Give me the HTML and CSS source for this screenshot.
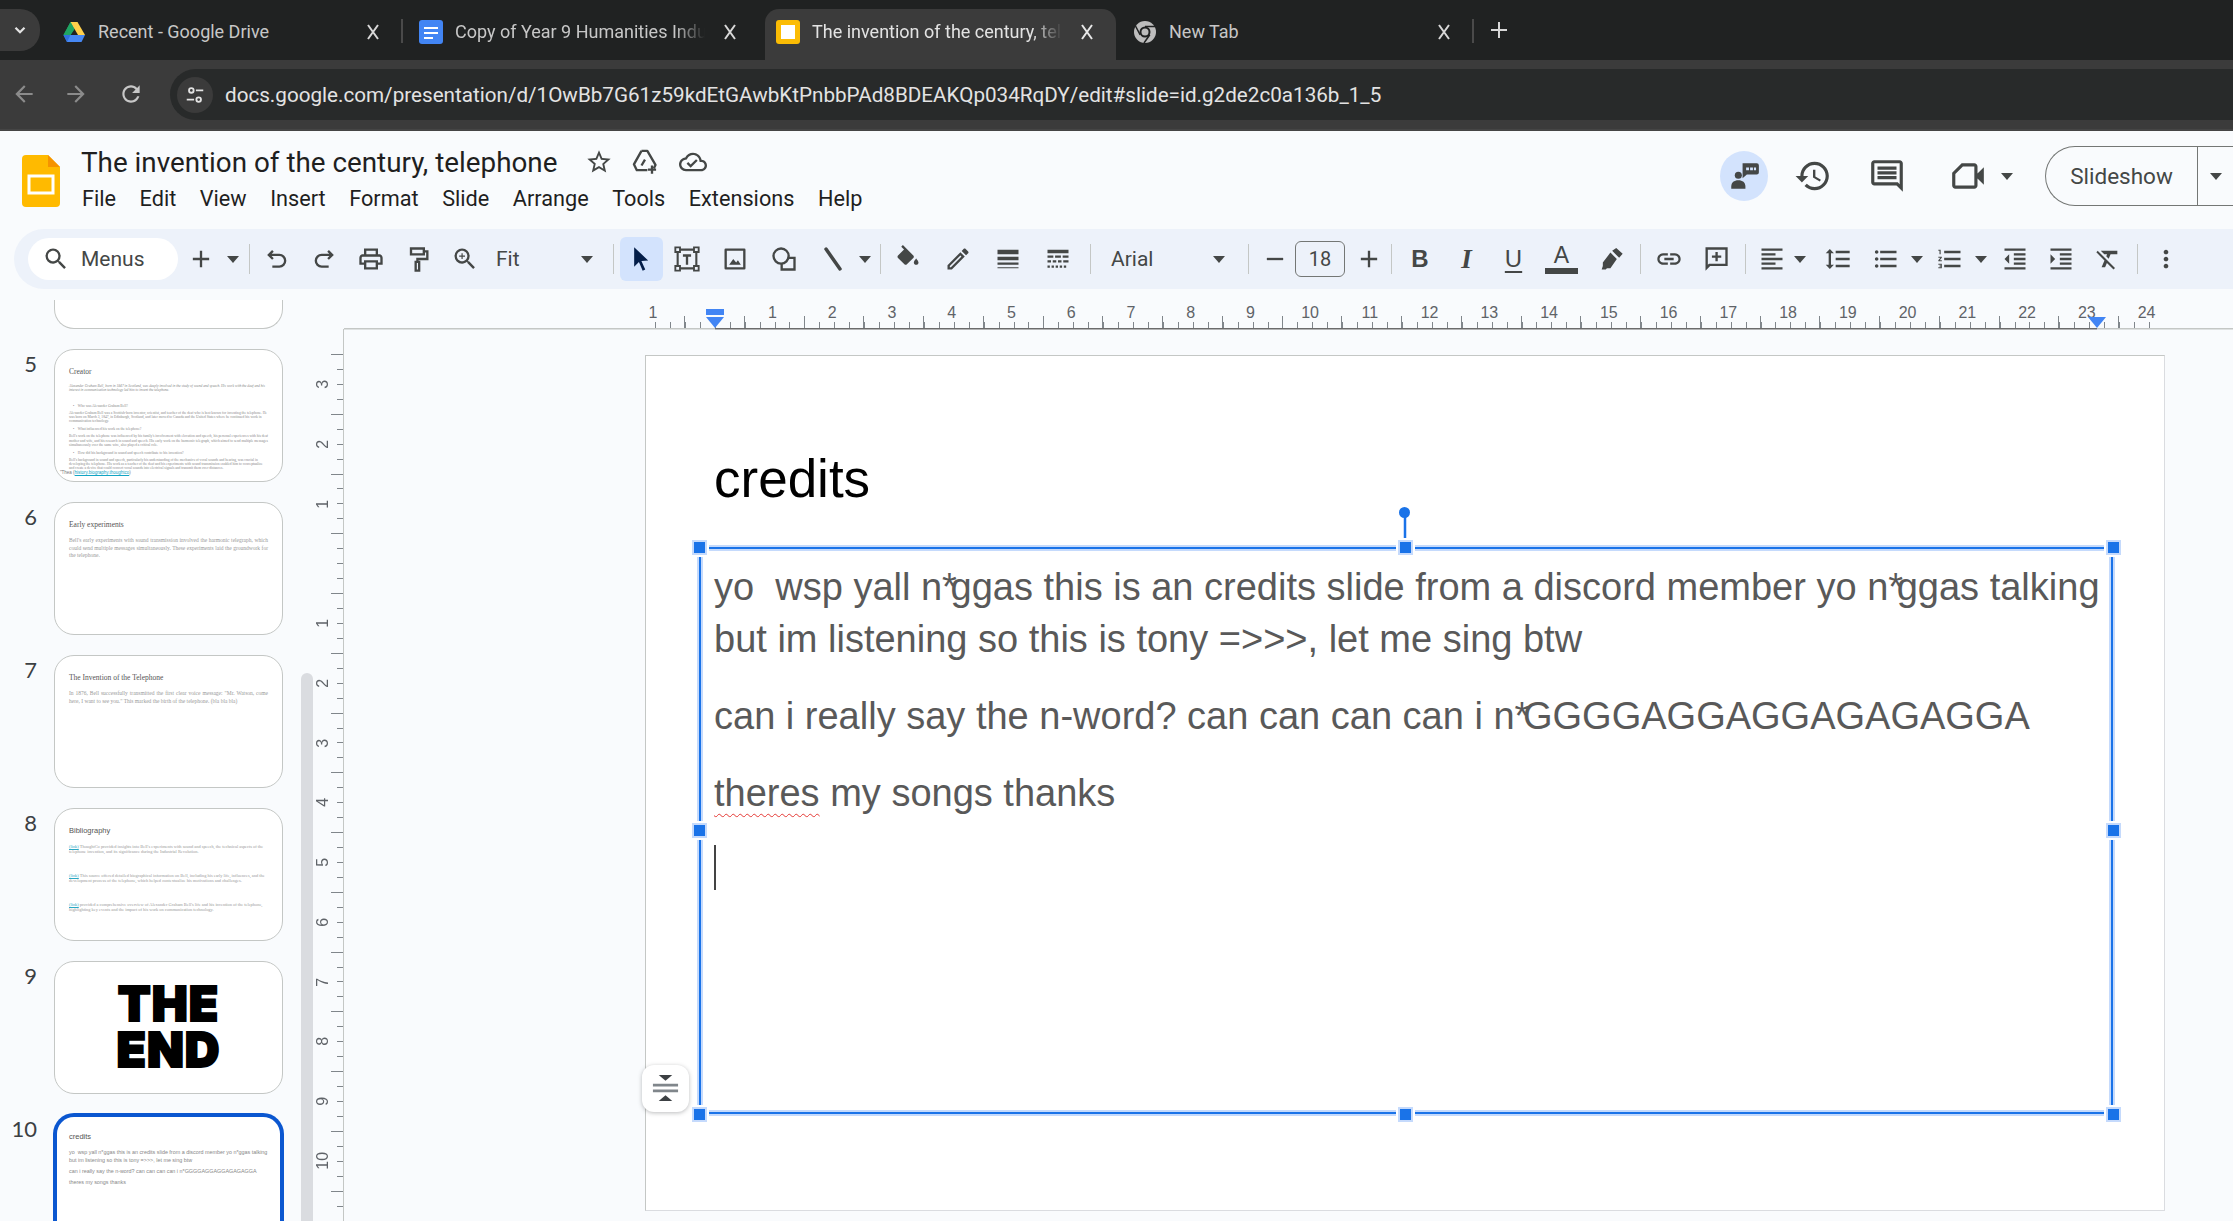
FILE: index.html
```html
<!DOCTYPE html>
<html lang="en">
<head>
<meta charset="utf-8">
<title>The invention of the century, telephone</title>
<link rel="stylesheet" href="styles.css">
</head>
<body>
<header class="tabstrip">
  <div class="tabsearch"><svg class="ic18" viewBox="0 0 24 24"><path d="M6 9l6 6 6-6" fill="none" stroke="#e3e3e3" stroke-width="3"/></svg></div>
  <div class="tab sep-after">
    <svg class="favicon" viewBox="0 0 24 24"><path d="M8.5 2h7l-3.5 8-3.5 5-7 0z" fill="#1fa463"/><path d="M8.5 2h7L23 15h-7z" fill="#ffd04b"/><path d="M1.500 15H8.500L16 15h7l-3.500 7H5z" fill="#4688f4"/><path d="M8.500 2L12 9 8.500 15h-7z" fill="#1fa463"/><path d="M1.500 15h7L5 22z" fill="#2f6fdc"/></svg>
    <span class="tabtext">Recent - Google Drive</span>
    <svg class="tabclose" viewBox="0 0 24 24"><path d="M7 5l10 14M17 5L7 19" stroke="#d8d8d8" stroke-width="2"/></svg>
  </div>
  <div class="tab">
    <svg class="favicon" viewBox="0 0 24 24"><rect x="0" y="0" width="24" height="24" rx="3" fill="#4285f4"/><path d="M5 7h14v2H5zm0 5h14v2H5zm0 5h9v2H5z" fill="#fff"/></svg>
    <span class="tabtext fade">Copy of Year 9 Humanities Industrial Revolution</span>
    <svg class="tabclose" viewBox="0 0 24 24"><path d="M7 5l10 14M17 5L7 19" stroke="#d8d8d8" stroke-width="2"/></svg>
  </div>
  <div class="tab active">
    <svg class="favicon" viewBox="0 0 24 24"><rect width="24" height="24" rx="3" fill="#fbbc04"/><rect x="5" y="5" width="14" height="14" fill="#fff"/></svg>
    <span class="tabtext fade">The invention of the century, telephone</span>
    <svg class="tabclose" viewBox="0 0 24 24"><path d="M7 5l10 14M17 5L7 19" stroke="#e8e8e8" stroke-width="2"/></svg>
  </div>
  <div class="tab sep-after">
    <svg class="favicon" viewBox="0 0 24 24"><circle cx="12" cy="12" r="11" fill="#bdbdbd"/><circle cx="12" cy="12" r="5.500" fill="#202222"/><circle cx="12" cy="12" r="3.500" fill="#bdbdbd"/><path d="M12 6.500h10M7.200 14.800L2.500 6M16.800 14.800L11 23" stroke="#202222" stroke-width="1.500"/></svg>
    <span class="tabtext">New Tab</span>
    <svg class="tabclose" viewBox="0 0 24 24"><path d="M7 5l10 14M17 5L7 19" stroke="#d8d8d8" stroke-width="2"/></svg>
  </div>
  <svg class="newtab" viewBox="0 0 24 24"><path d="M12 4v16M4 12h16" stroke="#d8d8d8" stroke-width="2"/></svg>
</header>

<nav class="addr">
  <svg class="nav nav-back" viewBox="0 0 24 24"><path d="M20 11H7.830l5.590-5.590L12 4l-8 8 8 8 1.410-1.410L7.830 13H20v-2z"/></svg>
  <svg class="nav nav-fwd" viewBox="0 0 24 24"><path d="M12 4l-1.410 1.410L16.170 11H4v2h12.170l-5.580 5.590L12 20l8-8z"/></svg>
  <svg class="nav nav-reload" viewBox="0 0 24 24"><path d="M17.650 6.350C16.200 4.900 14.210 4 12 4c-4.420 0-7.990 3.580-7.990 8s3.570 8 7.990 8c3.730 0 6.840-2.550 7.730-6h-2.080c-.82 2.330-3.040 4-5.650 4-3.310 0-6-2.690-6-6s2.690-6 6-6c1.660 0 3.140.69 4.220 1.780L13 11h7V4l-2.350 2.350z"/></svg>
  <div class="omnibox">
    <div class="chip"><svg viewBox="0 0 24 24"><circle cx="8" cy="7" r="2.500" fill="none" stroke="#e3e3e3" stroke-width="2"/><circle cx="16" cy="17" r="2.500" fill="none" stroke="#e3e3e3" stroke-width="2"/><path d="M13 7h8M3 17h8" stroke="#e3e3e3" stroke-width="2"/></svg></div>
    <span class="url">docs.google.com/presentation/d/1OwBb7G61z59kdEtGAwbKtPnbbPAd8BDEAKQp034RqDY/edit#slide=id.g2de2c0a136b_1_5</span>
  </div>
</nav>

<section class="docshead">
  <svg class="logo" viewBox="0 0 38 52"><path d="M4 0h22l12 12v36a4 4 0 0 1-4 4H4a4 4 0 0 1-4-4V4a4 4 0 0 1 4-4z" fill="#ffba00"/><path d="M26 0l12 12H26z" fill="#f59300"/><path d="M7 21h24v17H7z" fill="none" stroke="#fff" stroke-width="3"/></svg>
  <div class="doctitle">
    <div class="titlerow">
      <span class="title">The invention of the century, telephone</span>
      <svg class="ti ti-star" viewBox="0 0 24 24"><path d="M22 9.240l-7.190-.62L12 2 9.190 8.630 2 9.240l5.460 4.730L5.820 21 12 17.270 18.180 21l-1.630-7.030L22 9.240zM12 15.400l-3.760 2.270 1-4.280-3.320-2.880 4.380-.38L12 6.100l1.710 4.040 4.380.38-3.320 2.880 1 4.280L12 15.400z"/></svg>
      <svg class="ti ti-drive" viewBox="0 0 24 24"><path d="M9 2.500h5l7 12-1.500 3M9 2.500L2.500 14l2.500 5h9" fill="none" stroke="#444746" stroke-width="2" stroke-linejoin="round"/><path d="M9 15l3-5M18 15v7M14.500 18.500h7" fill="none" stroke="#444746" stroke-width="2"/></svg>
      <svg class="ti ti-cloud" viewBox="0 0 24 24"><path d="M19.350 10.040C18.670 6.590 15.640 4 12 4 9.110 4 6.600 5.640 5.350 8.040 2.340 8.360 0 10.910 0 14c0 3.310 2.690 6 6 6h13c2.760 0 5-2.240 5-5 0-2.640-2.050-4.780-4.650-4.960zM19 18H6c-2.210 0-4-1.790-4-4 0-2.050 1.530-3.760 3.560-3.970l1.070-.11.500-.95C8.080 7.140 9.940 6 12 6c2.620 0 4.880 1.860 5.390 4.430l.3 1.500 1.530.11c1.560.1 2.780 1.410 2.780 2.960 0 1.650-1.350 3-3 3zm-9-3.820l-2.090-2.090L6.500 13.500 10 17l6.010-6.010-1.410-1.410z"/></svg>
    </div>
    <div class="menubar"><span>File</span><span>Edit</span><span>View</span><span>Insert</span><span>Format</span><span>Slide</span><span>Arrange</span><span>Tools</span><span>Extensions</span><span>Help</span></div>
  </div>
  <div class="headright">
    <div class="avatar"><svg viewBox="0 0 24 24"><circle cx="8" cy="11.500" r="2.500"/><path d="M3 21v-1.500C3 16.500 5 15 8 15s5 1.500 5 4.500V21z"/><path d="M11 3h10a1.500 1.500 0 0 1 1.500 1.500v5A1.500 1.500 0 0 1 21 11h-7l-3 2.500z"/><path d="M13.500 6h2v2h-2zm2.800 0h2v2h-2zm2.700 0h1.500v2H19z" fill="#d3e3fd"/></svg></div>
    <svg class="hi hi-history" viewBox="0 0 24 24"><path d="M13 3c-4.970 0-9 4.030-9 9H1l3.890 3.890.07.14L9 12H6c0-3.870 3.130-7 7-7s7 3.130 7 7-3.130 7-7 7c-1.930 0-3.680-.79-4.940-2.060l-1.420 1.420C8.270 19.990 10.510 21 13 21c4.970 0 9-4.030 9-9s-4.030-9-9-9zm-1 5v5l4.280 2.540.72-1.210-3.500-2.080V8H12z"/></svg>
    <svg class="hi hi-comment" viewBox="0 0 24 24"><path d="M21.990 4c0-1.100-.89-2-1.990-2H4c-1.100 0-2 .9-2 2v12c0 1.100.9 2 2 2h14l4 4-.01-18zM20 4v13.170L18.830 16H4V4h16zM6 12h12v2H6zm0-3h12v2H6zm0-3h12v2H6z"/></svg>
    <svg class="hi hi-camera" viewBox="0 0 24 24"><path d="M18 10.480V6c0-1.100-.9-2-2-2H8L2 10v8c0 1.100.9 2 2 2h12c1.100 0 2-.9 2-2v-4.480l4 3.980v-11l-4 3.980zm-2-.79V18H4v-7.200L8.800 6H16v3.690z"/></svg>
    <span class="caret caret-cam"></span>
    <div class="slideshow"><span class="ss-label">Slideshow</span><span class="ss-drop"><span class="caret"></span></span></div>
  </div>
</section>

<section class="toolbar">
  <div class="menus"><svg class="tic" viewBox="0 0 24 24"><path d="M15.500 14h-.79l-.28-.27A6.471 6.471 0 0 0 16 9.500 6.500 6.500 0 1 0 9.500 16c1.610 0 3.090-.59 4.230-1.570l.27.28v.79l5 4.990L20.490 19l-4.990-5zm-6 0C7.010 14 5 11.990 5 9.500S7.010 5 9.500 5 14 7.010 14 9.500 11.990 14 9.500 14z"/></svg><span>Menus</span></div>
  <div class="tb w46"><svg class="tic" viewBox="0 0 24 24"><path d="M19 13h-6v6h-2v-6H5v-2h6V5h2v6h6v2z"/></svg></div>
  <div class="tb w18"><span class="caret"></span></div>
  <i class="sep ml7 mr3"></i>
  <div class="tb w47"><svg class="tic" viewBox="0 0 24 24"><path d="M8.500 5L5 8.500 8.500 12M5 8.500h9a5 5 0 0 1 0 10H8" fill="none" stroke="#444746" stroke-width="2"/></svg></div>
  <div class="tb w47"><svg class="tic" viewBox="0 0 24 24"><path d="M15.500 5L19 8.500 15.500 12M19 8.500h-9a5 5 0 0 0 0 10h6" fill="none" stroke="#444746" stroke-width="2"/></svg></div>
  <div class="tb w47"><svg class="tic" viewBox="0 0 24 24"><path d="M19 8h-1V3H6v5H5c-1.660 0-3 1.340-3 3v6h4v4h12v-4h4v-6c0-1.660-1.340-3-3-3zM8 5h8v3H8V5zm8 14H8v-4h8v4zm2-4v-2H6v2H4v-4c0-.55.45-1 1-1h14c.55 0 1 .45 1 1v4h-2z"/></svg></div>
  <div class="tb w47"><svg class="tic" viewBox="0 0 24 24"><path d="M6 3h11v5H6zM17 5.500h3V12h-8.500v2.500M10 14.500h3V22h-3z" fill="none" stroke="#444746" stroke-width="2"/></svg></div>
  <div class="tb w47"><svg class="tic" viewBox="0 0 24 24"><path d="M15.500 14h-.79l-.28-.27A6.471 6.471 0 0 0 16 9.500 6.500 6.500 0 1 0 9.500 16c1.610 0 3.090-.59 4.230-1.570l.27.28v.79l5 4.990L20.490 19l-4.990-5zm-6 0C7.010 14 5 11.990 5 9.500S7.010 5 9.500 5 14 7.010 14 9.500 11.990 14 9.500 14z"/><path d="M10 7H9v2H7v1h2v2h1v-2h2V9h-2z"/></svg></div>
  <div class="select sel-zoom"><span>Fit</span><span class="caret"></span></div>
  <i class="sep mr6"></i>
  <div class="tb w43 on"><svg class="tic cursor" viewBox="0 0 24 24"><path d="M7 2l12 11.200-5.800.5 3.300 7.300-2.200 1-3.200-7.400L7 18.600z" fill="#041e49"/></svg></div>
  <div class="tb w48"><svg class="tic" viewBox="0 0 24 24"><path d="M4 4h16v16H4z" fill="none" stroke="#444746" stroke-width="1.800"/><path d="M2 2h4v4H2zm16 0h4v4h-4zM2 18h4v4H2zm16 0h4v4h-4z" fill="#edf2fa" stroke="#444746" stroke-width="1.600"/><path d="M8.500 8h7v2h-2.500v7h-2v-7H8.500z"/></svg></div>
  <div class="tb w48"><svg class="tic" viewBox="0 0 24 24"><path d="M4 3h16a1 1 0 0 1 1 1v16a1 1 0 0 1-1 1H4a1 1 0 0 1-1-1V4a1 1 0 0 1 1-1zm1 2v14h14V5z"/><path d="M7 17l3.500-5 2.500 3 1.500-2 2.500 4z"/></svg></div>
  <div class="tb w50"><svg class="tic" viewBox="0 0 24 24"><circle cx="9.500" cy="9.500" r="6.500" fill="none" stroke="#444746" stroke-width="2"/><path d="M15 11h6v10H10v-5" fill="none" stroke="#444746" stroke-width="2"/></svg></div>
  <div class="tb w47"><svg class="tic" viewBox="0 0 24 24"><path d="M6 3.500L18 20.500" stroke="#444746" stroke-width="3" stroke-linecap="round"/></svg></div>
  <div class="tb w18"><span class="caret"></span></div>
  <i class="sep ml6 mr2"></i>
  <div class="tb w50"><svg class="tic" viewBox="0 0 24 24"><path d="M16.560 8.940L7.620 0 6.210 1.410l2.380 2.380-5.150 5.150c-.59.59-.59 1.540 0 2.120l5.500 5.500c.29.29.68.44 1.060.44s.77-.15 1.060-.44l5.500-5.500c.59-.58.59-1.530 0-2.120zM19 11.500s-2 2.170-2 3.500c0 1.100.9 2 2 2s2-.9 2-2c0-1.330-2-3.500-2-3.500z"/></svg></div>
  <div class="tb w50"><svg class="tic" viewBox="0 0 24 24"><path d="M14.060 9.020l.92.920L5.920 19H5v-.92l9.060-9.060M17.660 3c-.25 0-.51.1-.7.29l-1.830 1.830 3.750 3.750 1.830-1.830c.39-.39.39-1.020 0-1.410l-2.340-2.340c-.2-.2-.45-.29-.71-.29zm-3.600 3.190L3 17.250V21h3.750L17.810 9.940l-3.750-3.750z"/></svg></div>
  <div class="tb w50"><svg class="tic" viewBox="0 0 24 24"><path d="M3 17h18v-2H3v2zm0 3h18v-1H3v1zm0-7h18v-3H3v3zm0-9v4h18V4H3z"/></svg></div>
  <div class="tb w50"><svg class="tic" viewBox="0 0 24 24"><path d="M3 4h18v3H3zm0 5h5v2H3zm6.500 0h5v2h-5zM16 9h5v2h-5zM3 13h3v2H3zm4.500 0h3v2h-3zm4.500 0h3v2h-3zm4.500 0h4.500v2h-4.500zM3 17.500h2v2H3zm3.500 0h2v2h-2zm3.500 0h2v2h-2zm3.500 0h2v2h-2zm3.500 0h2v2h-2z"/></svg></div>
  <i class="sep ml7"></i>
  <div class="select sel-font"><span>Arial</span><span class="caret"></span></div>
  <i class="sep ml7 mr5"></i>
  <div class="tb w41"><svg class="tic" viewBox="0 0 24 24"><path d="M5 11h14v2H5z"/></svg></div>
  <div class="sizebox">18</div>
  <div class="tb w44 ml2"><svg class="tic" viewBox="0 0 24 24"><path d="M19 13h-6v6h-2v-6H5v-2h6V5h2v6h6v2z"/></svg></div>
  <i class="sep mr5"></i>
  <div class="tb w46 fmt fmt-b">B</div>
  <div class="tb w47 fmt fmt-i">I</div>
  <div class="tb w47 fmt fmt-u">U</div>
  <div class="tb w49 fmt fmt-a"><span>A</span><i class="colorbar"></i></div>
  <div class="tb w50"><svg class="tic" viewBox="0 0 24 24"><path d="M16 9L10.500 3.500 4 12v3l-1 3h3.500l1-1h3zM12 2l6 6 3-3.500-5.500-5z" transform="translate(1 3)"/></svg></div>
  <i class="sep ml4 mr5"></i>
  <div class="tb w46"><svg class="tic" viewBox="0 0 24 24"><path d="M3.900 12c0-1.710 1.390-3.100 3.100-3.100h4V7H7c-2.760 0-5 2.240-5 5s2.240 5 5 5h4v-1.900H7c-1.710 0-3.100-1.390-3.100-3.100zM8 13h8v-2H8v2zm9-6h-4v1.900h4c1.710 0 3.100 1.390 3.100 3.100s-1.390 3.100-3.100 3.100h-4V17h4c2.760 0 5-2.240 5-5s-2.240-5-5-5z"/></svg></div>
  <div class="tb w47"><svg class="tic" viewBox="0 0 24 24"><path d="M22 2H3v20l4-4h15V2zm-2 14H6l-1 1V4h15v12z"/><path d="M13.500 6h-2v3h-3v2h3v3h2v-3h3V9h-3z"/></svg></div>
  <i class="sep ml6 mr5"></i>
  <div class="tb w42"><svg class="tic" viewBox="0 0 24 24"><path d="M3 3h18v2H3zm0 4h12v2H3zm0 4h18v2H3zm0 4h12v2H3zm0 4h18v2H3z"/></svg></div>
  <div class="tb w14"><span class="caret"></span></div>
  <div class="tb w62"><svg class="tic" viewBox="0 0 24 24"><path d="M6 7h2.500L5 3.500 1.500 7H4v10H1.500L5 20.500 8.500 17H6V7zm4-2v2h12V5H10zm0 14h12v-2H10v2zm0-6h12v-2H10v2z"/></svg></div>
  <div class="tb w34"><svg class="tic" viewBox="0 0 24 24"><path d="M4 10.500c-.83 0-1.500.67-1.500 1.500s.67 1.500 1.500 1.500 1.500-.67 1.500-1.500-.67-1.500-1.500-1.500zm0-6c-.83 0-1.500.67-1.500 1.500S3.170 7.500 4 7.500 5.500 6.830 5.500 6 4.830 4.500 4 4.500zm0 12c-.83 0-1.500.68-1.500 1.500s.68 1.500 1.500 1.500 1.500-.68 1.500-1.500-.67-1.500-1.500-1.500zM7 19h14v-2H7v2zm0-6h14v-2H7v2zm0-8v2h14V5H7z"/></svg></div>
  <div class="tb w28"><span class="caret"></span></div>
  <div class="tb w38"><svg class="tic" viewBox="0 0 24 24"><path d="M2 17h2v.5H3v1h1v.5H2v1h3v-4H2v1zm1-9h1V4H2v1h1v3zm-1 3h1.800L2 13.100v.9h3v-1H3.200L5 10.900V10H2v1zm5-6v2h14V5H7zm0 14h14v-2H7v2zm0-6h14v-2H7v2z"/></svg></div>
  <div class="tb w24"><span class="caret"></span></div>
  <div class="tb w44"><svg class="tic" viewBox="0 0 24 24"><path d="M11 17h10v-2H11v2zm-8-5l4 4V8l-4 4zm0 9h18v-2H3v2zM3 3v2h18V3H3zm8 6h10V7H11v2zm0 4h10v-2H11v2z"/></svg></div>
  <div class="tb w48"><svg class="tic" viewBox="0 0 24 24"><path d="M3 21h18v-2H3v2zM3 8v8l4-4-4-4zm8 9h10v-2H11v2zM3 3v2h18V3H3zm8 6h10V7H11v2zm0 4h10v-2H11v2z"/></svg></div>
  <div class="tb w45"><svg class="tic" viewBox="0 0 24 24"><path d="M3.270 5L2 6.270l6.970 6.970L6.500 19h3l1.570-3.660L16.730 21 18 19.730 3.550 5.270 3.270 5zM6 5v.18L8.820 8h2.400l-.72 1.680 2.100 2.100L14.210 8H20V5H6z"/></svg></div>
  <i class="sep ml7 mr4"></i>
  <div class="tb w48"><svg class="tic" viewBox="0 0 24 24"><path d="M12 8c1.100 0 2-.9 2-2s-.9-2-2-2-2 .9-2 2 .9 2 2 2zm0 2c-1.100 0-2 .9-2 2s.9 2 2 2 2-.9 2-2-.9-2-2-2zm0 6c-1.100 0-2 .9-2 2s.9 2 2 2 2-.9 2-2-.9-2-2-2z"/></svg></div>
</section>

<main class="workspace">
  <aside class="film">
    <div class="row"><span class="num"></span><div class="card partial"></div></div>
    <div class="row"><span class="num">5</span>
      <div class="card">
        <div class="th-title serif">Creator</div>
        <div class="th-fine serif">
          <p class="fine-lead"><em>Alexander Graham Bell, born in 1847 in Scotland, was deeply involved in the study of sound and speech. His work with the deaf and his interest in communication technology led him to invent the telephone.</em></p>
          <p class="fine-q">•&nbsp;&nbsp;&nbsp;&nbsp;Who was Alexander Graham Bell?</p>
          <p>Alexander Graham Bell was a Scottish-born inventor, scientist, and teacher of the deaf who is best known for inventing the telephone. He was born on March 3, 1847, in Edinburgh, Scotland, and later moved to Canada and the United States where he continued his work in communication technology.</p>
          <p class="fine-q">•&nbsp;&nbsp;&nbsp;&nbsp;What influenced his work on the telephone?</p>
          <p>Bell's work on the telephone was influenced by his family's involvement with elocution and speech, his personal experiences with his deaf mother and wife, and his research in sound and speech. His early work on the harmonic telegraph, which aimed to send multiple messages simultaneously over the same wire, also played a critical role.</p>
          <p class="fine-q">•&nbsp;&nbsp;&nbsp;&nbsp;How did his background in sound and speech contribute to his invention?</p>
          <p class="fine-last">Bell's background in sound and speech, particularly his understanding of the mechanics of vocal sounds and hearing, was crucial in developing the telephone. His work as a teacher of the deaf and his experiments with sound transmission enabled him to conceptualize and create a device that could convert vocal sounds into electrical signals and transmit them over distances.</p>
        </div>
        <div class="th-link">"Thea (<u>history.biography.thoughtco</u>)</div>
      </div>
    </div>
    <div class="row"><span class="num">6</span>
      <div class="card">
        <div class="th-title serif">Early experiments</div>
        <p class="th-body serif">Bell's early experiments with sound transmission involved the harmonic telegraph, which could send multiple messages simultaneously. These experiments laid the groundwork for the telephone.</p>
      </div>
    </div>
    <div class="row"><span class="num">7</span>
      <div class="card">
        <div class="th-title serif">The Invention of the Telephone</div>
        <p class="th-body serif">In 1876, Bell successfully transmitted the first clear voice message: "Mr. Watson, come here, I want to see you." This marked the birth of the telephone. (bla bla bla)</p>
      </div>
    </div>
    <div class="row"><span class="num">8</span>
      <div class="card">
        <div class="th-title sans">Bibliography</div>
        <div class="th-biblio serif">
          <p><u>(link)</u> ThoughtCo provided insights into Bell's experiments with sound and speech, the technical aspects of the telephone invention, and its significance during the Industrial Revolution.</p>
          <p><u>(link)</u> This source offered detailed biographical information on Bell, including his early life, influences, and the development process of the telephone, which helped contextualize his motivations and challenges.</p>
          <p><u>(link)</u> provided a comprehensive overview of Alexander Graham Bell's life and his invention of the telephone, highlighting key events and the impact of his work on communication technology.</p>
        </div>
      </div>
    </div>
    <div class="row"><span class="num">9</span>
      <div class="card card-end"><div class="theend">THE<br>END</div></div>
    </div>
    <div class="row"><span class="num">10</span>
      <div class="card current">
        <div class="th-title sans">credits</div>
        <div class="th-credits">
          <p>yo&nbsp; wsp yall n*ggas this is an credits slide from a discord member yo n*ggas talking<br>but im listening so this is tony =&gt;&gt;&gt;, let me sing btw</p>
          <p>can i really say the n-word? can can can can i n*GGGGAGGAGGAGAGAGGA</p>
          <p>theres my songs thanks</p>
        </div>
      </div>
    </div>
    <div class="scrollthumb"></div>
  </aside>

  <div class="pane">
    <div class="corner"></div>
    <div class="hruler">
      <div class="hlabels"><span>1</span><span></span><span>1</span><span>2</span><span>3</span><span>4</span><span>5</span><span>6</span><span>7</span><span>8</span><span>9</span><span>10</span><span>11</span><span>12</span><span>13</span><span>14</span><span>15</span><span>16</span><span>17</span><span>18</span><span>19</span><span>20</span><span>21</span><span>22</span><span>23</span><span>24</span></div>
      <div class="hticks"></div>
      <div class="indent-bar"></div>
      <div class="indent-tri"></div>
      <div class="indent-tri right"></div>
    </div>
    <div class="vruler">
      <div class="vlabels"><span>3</span><span>2</span><span>1</span><span></span><span>1</span><span>2</span><span>3</span><span>4</span><span>5</span><span>6</span><span>7</span><span>8</span><span>9</span><span>10</span></div>
    </div>
    <div class="canvas">
      <div class="slide">
        <h1 class="slidetitle">credits</h1>
        <div class="textbox">
          <p>yo&nbsp; wsp yall n<span class="mask">*</span>ggas this is an credits slide from a discord member yo n<span class="mask">*</span>ggas talking<br>but im listening so this is tony =&gt;&gt;&gt;, let me sing btw</p>
          <p>can i really say the n-word? can can can can i n<span class="mask">*</span>GGGGAGGAGGAGAGAGGA</p>
          <p><span class="squiggle">theres</span> my songs thanks</p>
          <div class="textcaret"></div>
          <i class="rotline"></i><i class="rothandle"></i>
          <i class="h h-tl"></i><i class="h h-tc"></i><i class="h h-tr"></i>
          <i class="h h-ml"></i><i class="h h-mr"></i>
          <i class="h h-bl"></i><i class="h h-bc"></i><i class="h h-br"></i>
        </div>
        <div class="spacer-btn"><svg viewBox="0 0 30 30"><path d="M8 1h14l-7 6z" fill="#3c4043"/><path d="M2 10h26v3H2zm0 6h26v3H2z" fill="#80868b"/><path d="M8 28h14l-7-6z" fill="#3c4043"/></svg></div>
      </div>
    </div>
  </div>
</main>
</body>
</html>
```

FILE: styles.css
```css
* { box-sizing: border-box; }
html, body { margin: 0; height: 100%; }
body {
  width: 2233px; height: 1221px; overflow: hidden;
  display: flex; flex-direction: column;
  background: #f9fbfd;
  font-family: Roboto, "Liberation Sans", sans-serif;
  color: #1f1f1f;
}
p { margin: 0; }

/* browser tabs */
.tabstrip { flex: none; height: 60px; background: #202222; display: flex; align-items: flex-end; }
.tabsearch { width: 40px; height: 42px; margin: 0 8px 9px 0; background: #3b3b3b; border-radius: 0 20px 20px 0; display: flex; align-items: center; justify-content: center; }
.ic18 { width: 18px; height: 18px; }
.tab { position: relative; width: 357px; height: 51px; padding: 0 20px 6px 14px; display: flex; align-items: center; font-size: 18px; color: #c7c7c7; }
.tab.active { width: 351px; margin: 0 3px; padding-left: 11px; padding-right: 17px; background: #3b3b3b; border-radius: 14px 14px 0 0; color: #e3e3e3; }
.sep-after::after { content: ""; position: absolute; right: 2px; top: 10px; width: 2px; height: 24px; background: #4a4a4a; }
.favicon { flex: none; width: 24px; height: 24px; margin-right: 12px; }
.tabtext { flex: 1; min-width: 0; margin-right: 13px; white-space: nowrap; overflow: hidden; }
.tabtext.fade { -webkit-mask-image: linear-gradient(90deg, #000 88%, transparent 100%); mask-image: linear-gradient(90deg, #000 88%, transparent 100%); }
.tabclose { flex: none; width: 24px; height: 24px; }
.newtab { flex: none; width: 24px; height: 24px; margin: 0 0 18px 11px; }

/* address bar */
.addr { flex: none; height: 71px; background: #3b3b3b; border-bottom: 2px solid #454545; padding: 9px 0 0 0; display: flex; align-items: flex-start; }
.nav { flex: none; width: 26px; height: 26px; margin-top: 12px; }
.nav-back { margin-left: 11px; fill: #8b8b8b; }
.nav-fwd { margin-left: 26px; fill: #8b8b8b; }
.nav-reload { margin-left: 29px; fill: #c7c7c7; }
.omnibox { flex: 1; height: 51px; margin-left: 26px; background: #282a2a; border-radius: 26px 0 0 26px; display: flex; align-items: center; padding-left: 7px; }
.chip { width: 36px; height: 36px; border-radius: 50%; background: #3b3b3b; display: flex; align-items: center; justify-content: center; }
.chip svg { width: 22px; height: 22px; }
.url { margin-left: 12px; font-size: 20.650px; color: #e3e3e3; white-space: nowrap; }

/* docs header */
.docshead { flex: none; height: 98px; display: flex; align-items: flex-start; padding-left: 22px; position: relative; }
.logo { flex: none; width: 38px; height: 52px; margin-top: 24px; }
.doctitle { margin-left: 21px; padding-top: 14px; }
.titlerow { display: flex; align-items: center; height: 34px; }
.title { font-size: 27.800px; color: #1f1f1f; white-space: nowrap; }
.ti { flex: none; width: 28px; height: 28px; fill: #444746; }
.ti-star { margin-left: 28px; }
.ti-drive { margin-left: 18px; }
.ti-cloud { margin-left: 20px; }
.menubar { display: flex; gap: 23.500px; margin-top: 6px; font-size: 21.700px; line-height: 28px; margin-left: 1px; color: #1f1f1f; }
.headright { margin-left: auto; display: flex; align-items: center; height: 98px; }
.avatar { width: 48px; height: 50px; border-radius: 50%; background: #d3e3fd; display: flex; align-items: center; justify-content: center; margin-top: -8px; }
.avatar svg { width: 34px; height: 34px; fill: #444746; }
.hi { flex: none; width: 38px; height: 38px; fill: #444746; margin-top: -8px; }
.hi-history { margin-left: 26px; }
.hi-comment { margin-left: 36px; }
.hi-camera { margin-left: 43px; }
.caret { display: inline-block; width: 0; height: 0; border-left: 6px solid transparent; border-right: 6px solid transparent; border-top: 7px solid #444746; }
.caret-cam { margin: -8px 0 0 14px; }
.slideshow { width: 188px; height: 60px; margin: -8px 0 0 32px; border: 1.500px solid #747775; border-right: 0; border-radius: 30px 0 0 30px; display: flex; align-items: stretch; }
.ss-label { width: 151px; display: flex; align-items: center; justify-content: center; font-size: 22.500px; color: #444746; }
.ss-drop { flex: 1; border-left: 1.500px solid #747775; display: flex; align-items: center; justify-content: center; }

/* toolbar */
.toolbar { flex: none; height: 60px; margin-left: 14px; padding-left: 14px; background: #edf2fa; border-radius: 30px 0 0 30px; display: flex; align-items: center; }
.menus { flex: none; width: 150px; height: 42px; background: #fff; border-radius: 21px; display: flex; align-items: center; padding-left: 14px; gap: 11px; font-size: 21px; color: #444746; }
.tic { width: 28px; height: 28px; fill: #444746; flex: none; }
.cursor { margin-left: -3px; }
.tb { flex: none; height: 44px; display: flex; align-items: center; justify-content: center; border-radius: 6px; color: #444746; }
.tb.on { background: #d3e3fd; }
.w14 { width: 14px; } .w18 { width: 18px; } .w24 { width: 24px; } .w28 { width: 28px; } .w34 { width: 34px; } .w38 { width: 38px; }
.w41 { width: 41px; } .w42 { width: 42px; } .w43 { width: 43px; } .w44 { width: 44px; } .w45 { width: 45px; } .w46 { width: 46px; }
.w47 { width: 47px; } .w48 { width: 48px; } .w49 { width: 49px; } .w50 { width: 50px; } .w62 { width: 62px; }
.sep { flex: none; display: block; width: 1px; height: 30px; background: #c4c7c5; }
.ml2 { margin-left: 2px; } .ml4 { margin-left: 4px; } .ml6 { margin-left: 6px; } .ml7 { margin-left: 7px; }
.mr2 { margin-right: 2px; } .mr3 { margin-right: 3px; } .mr4 { margin-right: 4px; } .mr5 { margin-right: 5px; } .mr6 { margin-right: 6px; }
.select { flex: none; display: flex; align-items: center; justify-content: space-between; font-size: 21px; color: #444746; }
.sel-zoom { width: 125px; padding: 0 20px 0 8px; }
.sel-font { width: 150px; padding: 0 16px 0 20px; }
.sizebox { flex: none; width: 50px; height: 36px; border: 1.500px solid #747775; border-radius: 6px; display: flex; align-items: center; justify-content: center; font-size: 20px; color: #444746; }
.fmt { font-family: "Liberation Sans", sans-serif; font-size: 24px; line-height: 1; }
.fmt-b { font-weight: 700; }
.fmt-i { font-style: italic; font-weight: 700; font-family: "Liberation Serif", serif; font-size: 27px; }
.fmt-u { text-decoration: underline; text-underline-offset: 4px; text-decoration-thickness: 2px; }
.fmt-a { flex-direction: column; font-size: 23px; }
.colorbar { display: block; width: 33px; height: 6px; background: #444746; margin-top: 1px; }

/* workspace */
.workspace { flex: 1; min-height: 0; display: flex; }

/* filmstrip */
.film { position: relative; flex: none; width: 314px; padding-top: 11px; display: flex; flex-direction: column; gap: 20px; overflow: hidden; }
.row { flex: none; display: flex; align-items: flex-start; }
.num { flex: none; width: 37px; margin-right: 17px; text-align: right; font-family: Lato, sans-serif; font-size: 22px; line-height: 30px; color: #3c4043; }
.card { flex: none; width: 229px; height: 133px; background: #fff; border: 1px solid #c4c7c5; border-radius: 20px; padding: 16px 14px 0; overflow: hidden; }
.card.partial { height: 29px; border-top: 0; border-radius: 0 0 20px 20px; }
.card.current { height: 140px; border: 3px solid #0b57d0; box-shadow: 0 0 0 1px #0b57d0; border-bottom: 0; border-radius: 20px 20px 0 0; padding: 14px 12px 0; }
.serif { font-family: "Liberation Serif", serif; }
.sans { font-family: "Liberation Sans", sans-serif; }
.th-title { font-size: 7.500px; line-height: 12px; color: #555; white-space: nowrap; }
.th-fine { margin-top: 6px; font-size: 3.600px; line-height: 4.200px; color: #888; }
.th-fine p { margin-bottom: 3.800px; }
.th-fine .fine-lead { margin-bottom: 11.500px; }
.th-fine .fine-q { padding-left: 4px; margin-bottom: 2.800px; }
.th-fine .fine-last { margin-bottom: 0; }
.th-link { margin: 0 0 0 -9px; font-family: "Liberation Sans", sans-serif; font-size: 4.500px; line-height: 5px; color: #777; white-space: nowrap; }
.th-link u { color: #12a5c4; }
.th-body { margin-top: 6px; font-size: 5.500px; line-height: 7.600px; color: #999; text-align: justify; }
.th-biblio { margin-top: 7px; font-size: 4.400px; line-height: 5.400px; color: #999; }
.th-biblio p { margin-bottom: 18px; }
.th-biblio u { color: #2aa9c4; }
.th-credits { margin-top: 5px; font-family: "Liberation Sans", sans-serif; font-size: 5.400px; line-height: 8px; color: #888; white-space: nowrap; }
.th-credits p { margin-bottom: 3px; }
.card-end { padding: 19px 0 0; }
.theend { text-align: center; font-family: Inter, "Liberation Sans", sans-serif; font-weight: 900; font-size: 48px; line-height: 46px; letter-spacing: 1px; color: #000; -webkit-text-stroke: 2px #000; }
.scrollthumb { position: absolute; left: 301px; top: 384px; width: 12px; height: 600px; background: #dadce0; border-radius: 6px 6px 0 0; }

/* pane with rulers and canvas */
.pane { flex: 1; min-width: 0; display: grid; grid-template-columns: 30px 1fr; grid-template-rows: 41px 1fr; }
.hruler { position: relative; border-bottom: 1.500px solid transparent; background: linear-gradient(90deg, #c4c7c5 0 371px, #6b6b6b 371px 1753px, #c4c7c5 1753px) bottom / 100% 1.500px no-repeat; }
.hlabels { display: flex; padding: 14px 0 0 279px; font-family: "Liberation Sans", sans-serif; font-size: 16px; line-height: 20px; color: #5f6368; }
.hlabels span { flex: none; width: 59.760px; text-align: center; }
.hticks {
  position: absolute; left: 311px; bottom: 1px; width: 1508px; height: 12px;
  background:
    repeating-linear-gradient(90deg, #80868b 0 1px, transparent 1px 14.940px) 0 100% / 100% 6px no-repeat,
    repeating-linear-gradient(90deg, transparent 0 29.000px, #80868b 29.000px 30px, transparent 30px 59.760px) 0 100% / 100% 12px no-repeat;
}
.indent-bar { position: absolute; left: 362px; top: 20px; width: 18px; height: 6px; background: #4285f4; }
.indent-tri { position: absolute; left: 362px; top: 28px; width: 0; height: 0; border-left: 9px solid transparent; border-right: 9px solid transparent; border-top: 11px solid #4285f4; }
.indent-tri.right { left: 1744px; }
.vruler {
  position: relative; margin-top: -1px; border-right: 1.500px solid #c4c7c5;
  background:
    repeating-linear-gradient(180deg, #80868b 0 1px, transparent 1px 14.940px) 100% 25px / 6px 100% no-repeat,
    repeating-linear-gradient(180deg, #80868b 0 1px, transparent 1px 59.760px) 100% 25px / 12px 100% no-repeat;
}
.vlabels { display: flex; flex-direction: column; padding-top: 25px; width: 18px; font-family: "Liberation Sans", sans-serif; font-size: 16px; line-height: 18px; color: #5f6368; }
.vlabels span { flex: none; height: 59.760px; display: flex; align-items: center; justify-content: center; white-space: nowrap; writing-mode: vertical-rl; transform: rotate(180deg); }

.canvas { padding: 25px 0 0 301px; min-width: 0; overflow: hidden; }
.slide { position: relative; width: 1520px; height: 856px; background: #fff; border: 1.500px solid #dadce0; border-top-color: #c4c7c5; border-left-color: #c4c7c5; padding: 92px 0 0 53px; font-family: "Liberation Sans", sans-serif; }
.slidetitle { margin: 0 0 0 15px; font-weight: 400; font-size: 53px; line-height: 61px; color: #000; }
.textbox { position: relative; width: 1414px; height: 567px; margin-top: 38px; padding: 13px 0 0 13px; border: 2px solid #1a73e8; outline: 2px solid #c5dafc; box-shadow: inset 0 0 0 2px #c5dafc; font-size: 38px; line-height: 51.500px; color: #595959; white-space: nowrap; }
.textbox p { margin-bottom: 25.500px; }
.mask { letter-spacing: -.167em; }
.squiggle { text-decoration: underline wavy #e53935 1px; text-underline-offset: 7px; }
.textcaret { width: 2px; height: 45px; background: #444; margin-top: 17px; }
.h { position: absolute; width: 15px; height: 15px; background: #1a73e8; border: 2px solid #c5dafc; box-shadow: 0 0 0 2px #fff; }
.h-tl { left: -9.500px; top: -9.500px; } .h-tc { left: 696.500px; top: -9.500px; } .h-tr { right: -9.500px; top: -9.500px; }
.h-ml { left: -9.500px; top: 274px; } .h-mr { right: -9.500px; top: 274px; }
.h-bl { left: -9.500px; bottom: -9.500px; } .h-bc { left: 696.500px; bottom: -9.500px; } .h-br { right: -9.500px; bottom: -9.500px; }
.rotline { position: absolute; left: 702.500px; top: -32px; width: 2px; height: 24px; background: #1a73e8; box-shadow: 0 0 0 1px #c5dafc; }
.rothandle { position: absolute; left: 698px; top: -42px; width: 11px; height: 11px; border-radius: 50%; background: #1a73e8; }
.spacer-btn { position: absolute; left: -4px; top: 709px; width: 47px; height: 47px; background: #fff; border-radius: 12px; box-shadow: 0 1px 4px rgba(60,64,67,.35); display: flex; align-items: center; justify-content: center; }
.spacer-btn svg { width: 29px; height: 29px; }
```
